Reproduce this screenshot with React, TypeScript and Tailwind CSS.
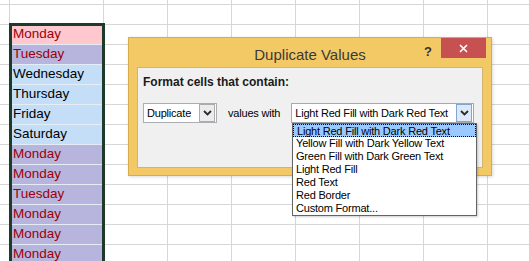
import React from "react";

type Cell = { text: string; kind: "pink" | "lav" | "blue" };

const COL_A: Cell[] = [
  { text: "Monday", kind: "pink" },
  { text: "Tuesday", kind: "lav" },
  { text: "Wednesday", kind: "blue" },
  { text: "Thursday", kind: "blue" },
  { text: "Friday", kind: "blue" },
  { text: "Saturday", kind: "blue" },
  { text: "Monday", kind: "lav" },
  { text: "Monday", kind: "lav" },
  { text: "Tuesday", kind: "lav" },
  { text: "Monday", kind: "lav" },
  { text: "Monday", kind: "lav" },
  { text: "Monday", kind: "lav" },
];

const OPTIONS = [
  "Light Red Fill with Dark Red Text",
  "Yellow Fill with Dark Yellow Text",
  "Green Fill with Dark Green Text",
  "Light Red Fill",
  "Red Text",
  "Red Border",
  "Custom Format...",
];

const fillFor = (kind: Cell["kind"]) => {
  if (kind === "pink") return "bg-[#ffc7ce] text-[#9c0006]";
  if (kind === "lav") return "bg-[#b7b5dd] text-[#9c0006]";
  return "bg-[#c4def7] text-black";
};

const Chevron = () => (
  <svg width="9" height="6" viewBox="0 0 9 6">
    <polyline points="1,1 4.5,4.5 8,1" fill="none" stroke="#2b2b2b" strokeWidth="1.8" />
  </svg>
);

const SheetRow = ({ cell, h }: { cell?: Cell; h: string }) => (
  <div className={`flex ${h}`}>
    <div className="w-[10px] border-r border-b border-[#d6d6d6]" />
    <div
      className={`w-[94px] border-r border-b flex items-center pl-[3px] text-[13.5px] ${
        cell ? fillFor(cell.kind) + " border-[#e4ecf5]" : "border-[#d6d6d6]"
      }`}
    >
      {cell?.text}
    </div>
    {[0, 1, 2, 3, 4, 5].map((i) => (
      <div key={i} className="w-[64px] border-r border-b border-[#d6d6d6]" />
    ))}
    <div className="flex-1 border-b border-[#d6d6d6]" />
  </div>
);

const App = () => {
  return (
    <div
      className="relative w-[529px] h-[261px] overflow-hidden bg-white"
      style={{ fontFamily: '"Liberation Sans", Arial, sans-serif' }}
    >
      {/* worksheet */}
      <div className="flex flex-col">
        <SheetRow h="h-[5px]" />
        <SheetRow h="h-[20px]" />
        {COL_A.map((c, i) => (
          <SheetRow key={i} cell={c} h="h-[20px]" />
        ))}
      </div>

      {/* selection border */}
      <div className="absolute left-[9px] top-[23px] w-[96px] h-[260px] border-[3px] border-[#1d3a2b]" />

      {/* dialog */}
      <div className="absolute left-[128px] top-[37px] w-[364px] h-[139px] bg-[#f2c965] border border-[#d8ab4c] flex flex-col shadow-[1px_1px_3px_rgba(0,0,0,0.15)]">
        <div className="h-[29px] flex">
          <div className="flex-1" />
          <div className="pt-[6px] text-[15px] text-[#3a3a3a] whitespace-nowrap">Duplicate Values</div>
          <div className="flex-1 flex justify-end items-start">
            <span className="mt-[4px] mr-[9px] text-[13px] font-bold text-[#333]">?</span>
            <div className="w-[45px] h-[20px] mr-[5px] bg-[#c75050] flex items-center justify-center">
              <svg width="9" height="9" viewBox="0 0 9 9">
                <path d="M1 1 L8 8 M8 1 L1 8" stroke="white" strokeWidth="1.6" />
              </svg>
            </div>
          </div>
        </div>
        <div className="flex-1 mx-[8px] mb-[7px] bg-[#f0f0f0] border border-[#d3b46c] pl-[5px] pt-[7px]">
          <div className="text-[12px] font-bold text-[#1a1a1a] leading-[14px]">Format cells that contain:</div>
          <div className="mt-[14px] flex items-center text-[11px] tracking-[-0.2px] text-black">
            <div className="w-[74px] h-[20px] bg-white border border-[#abadb3] flex items-center justify-between pl-[3px] pr-[1px]">
              <span>Duplicate</span>
              <div className="w-[16px] h-[18px] bg-[#ececec] border border-[#acacac] flex items-center justify-center">
                <Chevron />
              </div>
            </div>
            <span className="ml-[11px]">values with</span>
            <div className="ml-[11px] w-[183px] h-[20px] bg-white border border-[#a9a9a9] flex items-center justify-between pl-[3px] pr-[1px]">
              <span>Light Red Fill with Dark Red Text</span>
              <div className="w-[16px] h-[18px] bg-[#dde9f6] border border-[#7fa7d4] flex items-center justify-center">
                <Chevron />
              </div>
            </div>
          </div>
        </div>
      </div>

      {/* open list */}
      <div className="absolute left-[292px] top-[123px] w-[185px] h-[93px] bg-white border border-[#646464] flex flex-col text-[11px] tracking-[-0.2px] text-black shadow-[1px_1px_2px_rgba(0,0,0,0.2)]">
        {OPTIONS.map((o, i) => (
          <div
            key={o}
            className={`h-[13px] leading-[12px] pl-[3px] whitespace-nowrap ${
              i === 0 ? "bg-[#99c9ff] border border-dotted border-black pl-[2px]" : ""
            }`}
          >
            {o}
          </div>
        ))}
      </div>
    </div>
  );
};

export default App;
